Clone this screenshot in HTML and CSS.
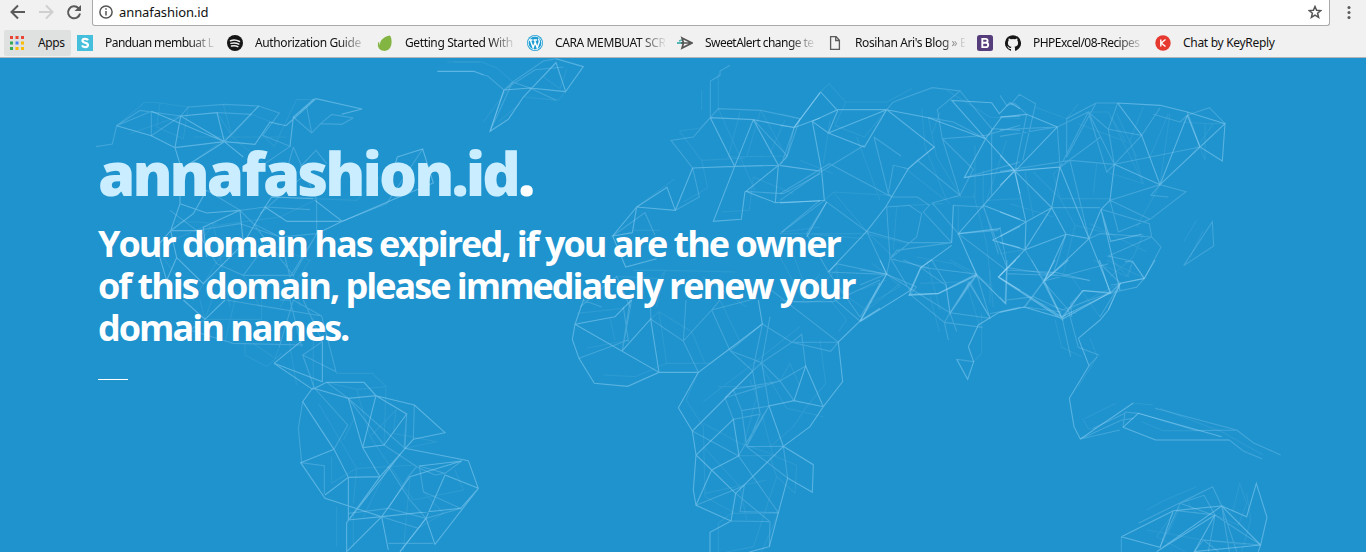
FILE: index.html
```html
<!DOCTYPE html>
<html lang="en">
<head>
<meta charset="utf-8">
<title>annafashion.id</title>
<link rel="stylesheet" href="styles.css">
</head>
<body>
<header class="browser">
  <div class="toolbar">
    <svg class="nav" width="84" height="25" viewBox="0 0 84 25" fill="none" stroke="#5a5a5a" stroke-width="2"><path d="M25 12H12M18 5.5 11.5 12 18 18.5"/><path stroke="#cfcfcf" d="M39 12H52M46 5.500 52.500 12 46 18.500"/><path d="M78.500 8.200A6 6 0 1 0 80 13.500"/><path fill="#5a5a5a" stroke="none" d="M81 5v6h-6.500z"/></svg>
    <div class="omnibox">
      <svg width="14" height="14" viewBox="0 0 14 14" fill="none" stroke="#555" stroke-width="1.500"><circle cx="7" cy="7" r="6.100"/><path d="M7 6v4.500M7 3.300v1.500"/></svg>
      <span class="url">annafashion.id</span>
      <svg class="star" width="14" height="14" viewBox="0 0 14 14" fill="none" stroke="#555" stroke-width="1.500"><path d="M7 1.500 8.600 5.200 12.800 5.600 9.600 8.300 10.600 12.300 7 10.100 3.400 12.300 4.400 8.300 1.200 5.600 5.400 5.200z"/></svg>
    </div>
    <svg class="menu" width="4" height="16" viewBox="0 0 4 16" fill="#5a5a5a"><circle cx="2" cy="2.500" r="1.500"/><circle cx="2" cy="7.500" r="1.500"/><circle cx="2" cy="12.500" r="1.500"/></svg>
  </div>
  <nav class="bookmarks">
    <a class="mark apps"><svg width="16" height="16" viewBox="0 0 16 16"><path fill="#ea4335" d="M1 1h3v3H1zM6.500 1h3v3h-3zM12 1h3v3h-3z"/><path fill="#34a853" d="M1 6.500h3v3H1zM1 12h3v3H1z"/><path fill="#4285f4" d="M6.500 6.500h3v3h-3z"/><path fill="#fbbc05" d="M12 6.500h3v3h-3zM6.500 12h3v3h-3zM12 12h3v3h-3z"/></svg><span>Apps</span></a>
    <a class="mark tight"><svg width="16" height="16" viewBox="0 0 16 16"><path fill="#45bfdc" d="M0 0h16v16H0z"/><path fill="none" stroke="#fff" stroke-width="2.200" d="M11 5.300C10 3.200 5.500 3.400 5.500 5.700 5.500 8.400 11 7 11 10 11 12.700 6 12.800 5 10.400"/></svg><span class="fade">Panduan membuat L</span></a>
    <a class="mark"><svg width="16" height="16" viewBox="0 0 16 16"><circle cx="8" cy="8" r="8" fill="#151515"/><path fill="none" stroke="#eee" stroke-width="1.500" stroke-linecap="round" d="M3.500 5.700c3-1 6.500-.6 9 .8M4 8.400c2.700-.8 5.500-.5 7.800.8M4.500 11c2.300-.6 4.500-.4 6.300.7"/></svg><span class="fade">Authorization Guide</span></a>
    <a class="mark"><svg width="16" height="16" viewBox="0 0 16 16"><path fill="#82b541" d="M12.800.4c2 1.500 2.200 7.500 1.200 10.600-1.200 3.600-4.700 5.400-7.800 4.800C2 15-.2 10.800 1.300 7.400c.3-.6.800-.5.900 0 .1 1 .3 2.200.8 2.700C2.600 5.500 6.500 1.700 12.800.4z"/></svg><span class="fade">Getting Started With</span></a>
    <a class="mark"><svg width="16" height="16" viewBox="0 0 16 16"><circle cx="8" cy="8" r="8" fill="#1c9cd3"/><circle cx="8" cy="8" r="6.800" fill="none" stroke="#e9f6fb" stroke-width=".9"/><path fill="none" stroke="#fff" stroke-width="1.400" d="M2 5h3.500M6.500 5H10M3.300 5 6.100 12.800 8.300 6.800M7.500 5l2.700 7.800 2-5.500c.5-2-.8-2-.6-3.700"/></svg><span class="fade">CARA MEMBUAT SCR</span></a>
    <a class="mark tight"><svg width="16" height="16" viewBox="0 0 16 16" fill="none"><path stroke="#55b6b5" stroke-width="1.800" d="M0 8h6M2 6l3-1"/><path stroke="#555" stroke-width="1.700" d="M5 3l10 5-10 5 1.500-5zM4 8h9"/></svg><span class="fade">SweetAlert change te</span></a>
    <a class="mark"><svg width="16" height="16" viewBox="0 0 16 16" fill="none" stroke="#5a5a5a" stroke-width="1.300"><path d="M3.600 1.600h5.500l3.300 3.600v9.200H3.600zM8.700 2v3.500h3.700"/></svg><span class="fade">Rosihan Ari's Blog » B</span></a>
    <a class="mark solo"><svg width="16" height="16" viewBox="0 0 16 16"><rect width="16" height="16" rx="2.500" fill="#563d7c"/><path fill="none" stroke="#fff" stroke-width="1.900" d="M5.300 3.900H8.500c2.800 0 2.800 3.900 0 3.900H5.300h3.500c3.200 0 3.200 4.300 0 4.300H5.300z"/></svg></a>
    <a class="mark tight"><svg width="16" height="16" viewBox="0 0 16 16"><path fill="#161616" d="M8 .2a8 8 0 0 0-2.500 15.600c.4.100.5-.2.500-.4v-1.500c-2.200.5-2.700-.9-2.700-.9-.4-.9-.9-1.200-.9-1.200-.7-.5.100-.5.100-.5.800.1 1.200.8 1.200.8.700 1.200 1.900.9 2.300.7.100-.5.300-.9.500-1.100-1.800-.2-3.600-.9-3.600-4 0-.9.300-1.600.8-2.100-.1-.2-.4-1 .1-2.100 0 0 .7-.2 2.200.8a7.500 7.500 0 0 1 4 0c1.500-1 2.200-.8 2.200-.8.400 1.100.2 1.900.1 2.100.5.600.8 1.300.8 2.100 0 3.100-1.900 3.800-3.700 4 .3.300.6.800.6 1.500v2.200c0 .2.100.5.500.4A8 8 0 0 0 8 .2z"/></svg><span class="fade">PHPExcel/08-Recipes</span></a>
    <a class="mark chat"><svg width="16" height="16" viewBox="0 0 16 16"><circle cx="8" cy="8" r="7.700" fill="#e6392f"/><path fill="none" stroke="#fff" stroke-width="1.400" d="M5.800 4.500v7M10.500 4.500 6.200 8l4.300 3.500"/></svg><span>Chat by KeyReply</span></a>
  </nav>
</header>
<main class="hero">
<svg class="map" width="1366" height="494" viewBox="0 58 1366 494" aria-hidden="true">
  <!-- North America -->
  <g transform="translate(80 57) scale(.33333)">
    <path class="hi" d="M110 206 214 236 285 272 433 254 302 177 285 272 299 318M302 177 411 167 433 254 214 163M433 254 536 147M300 410V440L272 521 340 470 380 400M300 440 380 468 480 460M272 521H350M272 521 230 570 260 670 290 602 272 521M630 268 640 180 703 125M433 254 299 340M433 254 525 262 570 195 618 206 680 150 708 125 846 156 785 172M433 254 490 300M705 430 787 493 945 425 1060 378 1028 276 952 300 940 340M620 493H787L710 530M290 602 370 680 490 560 480 460 370 510 380 600M555 450 620 493M555 450 575 420 700 425M555 450 490 560"/>
    <path class="md" d="M48 269 97 261 110 206 180 160 302 177M214 163V236L302 177M110 206 214 163M302 177 325 150 433 142 536 147 598 168 548 235 630 268 525 340M411 167 515 172M640 180 695 228 722 200 755 172 820 183M680 150 695 228M640 270 710 430 710 530 630 660 600 540 520 500 480 460 555 450 690 458M640 270 620 340M660 330 708 280 740 320M787 493 920 440 1028 276M722 200 785 202 820 183M350 520 480 500 600 540 710 530M350 520 410 620 490 655H640L520 500M640 655 710 530M490 655 560 560M270 460 350 520M690 340 620 400 540 470M380 400 480 460"/>
    <path class="lo" d="M110 206 195 135 240 138 325 150 310 245 230 210 240 138M411 167 455 235 430 142M455 235 515 172 598 205M650 127 583 268 548 235M340 240H620M230 570 370 510 600 480 705 430M250 602 340 730 420 600 560 560 690 610 600 750M290 495 350 495 410 500M940 320 830 430 700 425M330 600 400 500 450 750M490 655 540 750M640 655 660 750M150 230 300 177M650 127 700 128M300 340 450 235 580 340M1120 15H1200"/>
    <path class="md" d="M1072 43H1183L1210 54"/>
  </g>
  <!-- Central and South America -->
  <g transform="translate(80 300) scale(.33333)">
    <path class="hi" d="M310 0 375 58 435 0M582 190 698 268 740 247H852L888 287 1003 315M582 190 727 245V125M582 190 668 120M698 264 805 295 888 287 848 443 900 530 800 668V755L905 650 735 595 662 488 762 448 668 305 698 264M762 448 805 532V660L905 650 1142 625 1195 565 1165 482 975 445 800 668M805 295 848 443M1003 315 1095 398 1000 418 900 530 805 532 735 585M888 287 980 342 912 435 848 443M1195 565 1065 733 1038 655 1095 525 1195 565M905 650 990 530 1145 483 1018 498M905 650 925 750M1038 655 960 755"/>
    <path class="md" d="M440 0 725 48 768 215 668 165 727 125 670 0M725 48 640 0 598 140M600 0 630 0 665 140M375 58 330 90 460 130 670 135M668 165 703 264M703 264 803 375 762 448M662 488 733 497V583M668 305 655 385 665 488M740 247 805 295 912 435 1010 500 985 530 925 625 1038 655 1142 625 1030 575 1018 498 1095 520 1145 483M805 295 975 445 980 342 972 445M1000 418 1003 315M925 625 805 640M925 500 990 600 1038 655 1015 685 905 650M925 730 1060 730M1015 685 960 755M1010 500 1065 525 1095 520"/>
    <path class="lo" d="M360 0 375 58H545V0M465 0 435 125M395 0 375 58M495 130V165L560 200 605 160M520 130 585 175 598 140M620 80 650 255M700 50V264M768 220H877L918 260 830 268 740 247M715 310 830 505 820 610M790 420 825 350M830 268 870 410 948 330 940 400 1070 425 975 445M870 410 1000 600M755 470 755 550 830 505 1010 495M912 435 918 260M1030 575 1090 640 1015 685M1000 600 1150 570 1125 510M770 620V740M820 640V740M925 500 850 650M990 530 970 755"/>
  </g>
  <!-- Greenland and western Europe -->
  <g transform="translate(420 57) scale(.33333)">
    <path class="hi" d="M252 99 210 223 265 187 310 120 408 17 437 104 490 29 408 5M252 99 330 93 437 104M871 182 1000 188 1122 212 1200 183M871 182 944 328 1075 325 1000 188 944 328 880 493 964 487 975 403M818 333 944 328M818 333 766 460 650 450 578 537 637 527 650 450 741 391 766 460M1075 325 978 403 1066 437 1200 432M1075 325 1066 437M578 537 617 630 710 605M1122 212 1200 107"/>
    <path class="md" d="M52 43H160L204 58 252 99 278 75 370 12 408 5M252 99 210 223 278 75 330 93 408 130M252 99 345 38 430 30M818 333 753 250 820 240 871 182V72L900 55V42L930 25M818 333 838 420 766 460M1075 325 1200 342M1122 212 1085 320M1000 188 1102 297 1140 185 1022 160 895 155 871 182M1075 325 1102 297M978 403 1090 410 1200 350M1085 525 1200 430M578 537 675 467 705 535M480 750 590 658 630 750M490 730 545 750"/>
    <path class="lo" d="M80 15H185L230 32 278 75 190 195M408 17 370 60 420 95 440 35M310 120 415 130 437 104M235 195 300 140M895 50V155L1005 400M845 100V160M960 165 925 300 1102 297M778 222 840 213 871 182M778 222 845 310 975 303M845 310 863 393 790 435M765 365 650 450M905 465 988 460 1000 360 1120 410M1022 160 980 300M1022 160 1100 300M1095 190 1050 290M640 520H720M590 658 720 665 735 640 945 645M1085 525 1200 510M1100 540 1160 700 1200 650M640 640 735 640 710 750M850 660 980 750"/>
  </g>
  <!-- Africa -->
  <g transform="translate(560 280) scale(.33333)">
    <path class="hi" d="M72 55 45 133 37 178 57 235 103 310 203 319 297 277 45 133 165 110 215 60M187 212 272 117 297 277H415L607 132M835 186 900 123 960 85M415 277 355 383 397 453 408 525 400 630 408 676 513 723 527 640 455 570 408 525 520 418 537 527 455 570 408 676M397 453 578 273M607 132 595 60M835 186 848 305 790 380 702 362 627 378 670 499 760 554 757 637 683 594 655 698 628 800 568 816M670 499 527 640M513 723 450 757V816M670 499 750 440 790 380 737 258 702 362M960 10 900 123"/>
    <path class="md" d="M215 60 187 212M607 132 695 187M272 117V60M272 117 370 183 415 277M370 183 455 90 480 60M455 90 510 212 605 248 627 378 535 527 397 453M510 212 607 132 578 273 510 212M455 90 590 55M607 132 695 187 605 248 578 273 600 400M560 499 627 378M695 187 812 214 835 186 620 20M835 186 695 187 725 163 737 258 660 303 520 328 495 353 660 303 702 362M495 353 520 418 600 403 560 500 670 499M520 328 545 392 627 378M545 392 560 500 683 594M535 527 655 698 540 695 553 617 408 676M605 248 660 303M187 212 210 60M190 80 205 185M57 235 205 180M630 110 605 248M513 723 630 725M527 640 630 725 628 800M370 183 378 60M670 499 683 594M900 123 820 55M700 65 820 65 960 0"/>
    <path class="lo" d="M50 100 190 85M80 205 205 180M297 95 320 250H450L540 185 480 60M320 250 225 290 130 285M272 117 297 95 395 155 435 250M150 115 165 180M378 360 430 440 435 650 525 700M378 360 415 277M430 365 580 250 720 140M430 430 540 490 650 527H537M475 320 600 320M780 180 797 310 740 380 700 440 630 500M660 303 690 250 720 320M600 250 680 385 790 410M605 403 640 527 710 555 705 640 650 590 630 530M430 500 540 620 560 720M475 816V730L513 700H655L605 816M570 300 590 350 550 500M650 590 580 800 500 816M835 155 860 120 810 60M435 640 620 600"/>
  </g>
  <!-- Northern and central Asia -->
  <g transform="translate(780 57) scale(.33333)">
    <path class="hi" d="M43 210 122 105 173 161 145 228 320 158H173L97 193 145 228 253 270 320 158 463 270 385 335 317 450 260 523 145 645M140 435 80 540M320 158 445 182 617 245 515 130 635 137 658 170 690 137 720 155M617 245 703 340 610 445 535 530 660 515M617 245 665 180 720 177M703 340 720 410M610 445 720 487M703 340 553 362 617 245M97 193 125 343 133 430 0 438M637 550 720 508M637 550 720 572M720 595 655 660 720 700M515 565 423 632 387 715 475 710 590 655 535 530M515 557 520 445"/>
    <path class="md" d="M0 205 43 210 20 300 0 322M0 325 125 343 0 430M125 343 253 265M0 530 133 430 260 523 320 652 240 780M140 435 80 530 145 645M320 450 330 605 350 580 515 557H385L260 523M317 450 387 445 425 470 410 540 330 605 445 632M282 240 325 410 335 420 148 320 0 410M282 240 363 297M325 410 340 325 385 335 412 310 540 415 487 245 617 235 720 205M335 420H412L448 445 430 465 515 557M340 135 457 92 540 102 472 158 487 245 580 337 540 415 457 438 535 530 680 640M463 270 412 310M540 102 635 215 635 415M635 215 720 220M553 362 720 315M520 445 610 450 680 630 677 740 590 655 567 680 630 780M320 652 145 645 170 620 320 652 410 690M320 652 330 605M423 632 498 685 510 770 567 680M387 715 410 690M535 530 655 520M610 445 655 590M320 158 340 135M145 645 240 780M445 182 520 195 617 245M510 770 590 655M630 770 720 750"/>
    <path class="lo" d="M122 105 147 80 197 135 320 135 395 95M43 210 60 185 0 170M197 135 165 205 253 240 320 158M230 240 300 430M150 190 130 320M60 310 160 350M0 530H260L387 560M133 430 160 405 335 415M160 405 260 523M80 530 250 545M0 600 70 730 170 640M170 620 175 700 260 760 360 680M350 450 340 580M387 445 490 440M425 155 435 270 500 430M445 182 470 300 540 415M585 265V420H520M610 340V445M680 250 620 430 720 425M535 530V450M580 410 620 560 640 750M410 600 520 620 640 690M0 730 80 737 150 725M260 523 350 610M370 330 510 440M500 100 630 180 720 185M455 235 480 165"/>
  </g>
  <!-- Eastern Asia -->
  <g transform="translate(1000 57) scale(.33333)">
    <path class="hi" d="M0 180 80 172 172 210 45 342 0 295M45 342 0 385M45 342 180 330 155 452 78 495 45 342 155 452 198 532 133 672 267 545 180 330M0 465 78 495 0 538M0 557 75 578 78 495M75 578 0 655M75 578 155 452M75 578 198 532 267 545 303 457 330 430 343 322 480 383 600 270 675 200 667 312 600 270 562 175 480 383 425 235 353 138M0 662 185 780 133 672M185 780 332 707 267 545M353 138 480 145 562 165 675 200M303 457 360 700M303 457 332 553 425 532"/>
    <path class="md" d="M0 218 172 210 265 165 325 217 353 138H288L200 185V300L288 138M0 238 172 210 180 330 265 165 302 240 180 330 0 343M0 115 20 145 45 140 80 172 45 342M35 140 58 112 107 140 68 310M265 165 320 345 343 322 302 240M325 217 425 235 480 153M343 322 425 235M343 322 600 270M460 172 540 195 562 175 628 152 675 200M562 165 600 270M330 430 480 383 558 404 450 487 355 525 330 430 450 487M480 383 453 415 505 420M0 343 210 310 343 322M210 310 267 545M325 217 343 322M155 452H300M267 545 300 530 455 540 448 500 303 457M455 540 483 570 433 665 332 685M455 540 325 597 397 613 433 665M133 672 325 620M75 578 133 672M22 632 270 670M22 632 18 740 0 720M185 780 250 700 332 710 360 680 300 780M0 510 22 632M0 765 75 750 185 765M551 626 637 494 641 567 551 626M155 645 130 672M20 650 160 655M75 750 133 672M198 532 160 650M215 780 212 740 250 700"/>
    <path class="lo" d="M235 140 200 185 105 150M325 165 375 250M265 165 325 165 430 380M235 200 380 255M350 170 410 300M430 150 390 250 430 380 320 345M510 170 480 383M540 195 625 200 675 200M562 175 615 310V200M180 425H330M180 425 160 350 210 310M100 345 180 425 225 505 190 650M225 505 330 530M290 320 280 410M30 440 160 480M0 590 75 578M430 532 400 600 330 660M397 613 385 660 325 597M270 500 440 585M215 660 300 780M332 710 410 690 433 665M90 730 230 770M590 490 551 555M610 520 570 600M75 345 100 480M480 383 410 510M505 170 450 300M640 200 570 300"/>
  </g>
  <!-- India, south-east Asia and Australia -->
  <g transform="translate(860 260) scale(.33333)">
    <path class="hi" d="M0 185 80 42 60 0M0 185 150 92 182 22 215 0M415 52 607 178 550 65 585 0M415 52 468 0M550 65 625 0M290 298 323 358 341 305 325 260 355 195 415 158 492 141 607 175 668 92 750 98 718 0M607 178 750 98M655 235 720 180 745 150 781 70 853 55 885 0M655 235 687 317 628 415 642 500 661 537 820 429M789 502 887 540H1108M789 502 835 460 1085 530M784 830 940 752 1085 738 890 875M784 830 900 862 940 752M1085 738 1202 855 1195 875M1085 738 1160 770 1189 670 1221 772 1202 855M1202 855 1003 875 1065 765 890 875M150 103 235 100 350 42"/>
    <path class="md" d="M0 30 80 42 0 75M80 42 270 158 350 42 435 130 441 0M95 0 150 92M130 0 182 22 350 42 330 0M215 0 258 72 270 158 330 68 390 175 270 158 290 215M150 103 253 187 328 65M253 187 265 240M253 187 368 202M390 175 350 42M441 22 415 52M441 30 590 38 690 62M492 141 550 65 515 0M550 65 625 150 655 262 718 286M607 178 632 290M725 15 781 70 750 98 830 82 853 55 818 5H795M290 298 341 305M661 537 785 480 820 475M687 317 712 290M789 502 795 456 835 460 1010 512 1130 510 885 445M1130 510 1180 548 1262 585M1108 540 1150 573 1207 597M661 537 780 510M700 505 795 460M835 790 1058 680 1085 738M1058 680 960 730 900 862M1065 765 1032 706 960 730M784 830V875M1065 765 1202 855 1030 840 1075 875M1085 738 1108 875M960 730 1060 765M1030 840 1003 875M1130 875 1085 738M950 752 1065 765 1045 875M745 150 781 70M441 120 520 110 607 150 750 98"/>
    <path class="lo" d="M35 10 80 42 120 80 30 130M180 70 330 65M200 0 240 150M390 30V130M350 42 270 0M320 70 360 202M210 110 238 215M365 160V280L341 305M585 178 605 262 665 290M625 150 700 110 781 70M690 235 712 290 655 380M668 475 685 507 710 505M675 475 768 430M820 429 880 435M900 445 1085 515 1210 585M845 485 910 512H1010M860 750 915 720 1010 680M860 810 1030 840M960 740 925 820M985 730 1010 760M1118 755 1139 670 1160 730 1135 795 1065 765M1160 700 1172 780 1145 875M940 760 890 830 975 875M1030 840 1160 855M700 0 800 50 818 5M740 0 853 55M0 90 80 60"/>
  </g>
</svg>
<div class="message">
  <h1><span>annafashion.id</span>.</h1>
  <h2>Your domain has expired, if you are the owner<br>of this domain, please immediately renew your<br>domain names.</h2>
  <hr>
</div>
</main>
</body>
</html>
```
FILE: styles.css
```css
* { box-sizing: border-box; }
body { margin: 0; width: 1366px; height: 552px; overflow: hidden; font-family: "Open Sans", sans-serif; }
.browser { height: 58px; background: #f1f1f1; border-bottom: 1px solid #b2b5b8; color: #111; font: 12px/16px "Noto Sans", sans-serif; }
.toolbar { display: flex; height: 26px; }
.nav { flex: none; }
.omnibox { display: flex; align-items: center; width: 1238px; margin-left: 8px; padding: 0 7px 2px 6px; background: #fff; border: solid #aaa; border-width: 0 1px 1px; border-radius: 0 0 3px 3px; }
.url { margin-left: 6px; font-size: 13px; letter-spacing: -.1px; }
.star { margin-left: auto; }
.menu { margin: 5px 0 0 17px; }
.bookmarks { display: flex; height: 31px; padding: 4px 0 0 4px; }
.mark { display: flex; align-items: center; width: 150px; height: 26px; white-space: nowrap; letter-spacing: -.38px; }
.mark svg { flex: none; }
.mark span { width: 110px; margin-left: 12px; overflow: hidden; }
.apps { width: 67px; margin-right: 6px; padding-left: 5px; background: #dfe1e0; border-radius: 2px; }
.apps span { width: auto; margin-left: 13px; }
.solo { width: 28px; }
.tight { letter-spacing: -.55px; }
.chat { letter-spacing: -.3px; }
.fade { -webkit-mask-image: linear-gradient(to right, #000 84px, transparent 112px); mask-image: linear-gradient(to right, #000 84px, transparent 112px); }
.hero { position: relative; height: 494px; background: #1f93ce; overflow: hidden; }
.map { position: absolute; inset: 0; fill: none; }
.map path { stroke: #a5dcfa; stroke-width: 3.3; }
.map .hi { opacity: .44; }
.map .md { opacity: .26; }
.map .lo { opacity: .11; }
.message { position: relative; padding: 75px 0 0 98px; color: #fff; }
h1 { margin: 0; font-size: 60px; font-weight: 800; line-height: 80px; letter-spacing: -3px; }
h1 span { color: #caeeff; }
h2 { margin: 10px 0 0; font-size: 36px; font-weight: 700; line-height: 42px; letter-spacing: -2px; white-space: nowrap; }
hr { width: 30px; height: 1px; margin: 30px 0 0; border: 0; background: #fff; }
```
